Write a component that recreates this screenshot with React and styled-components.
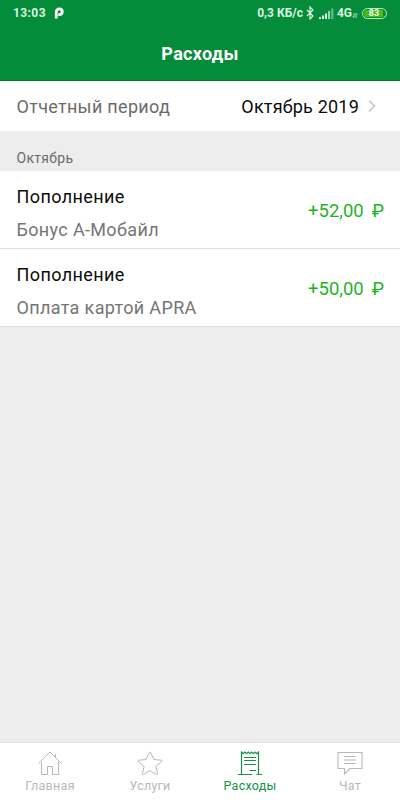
import React from 'react';
import styled, { createGlobalStyle } from 'styled-components';

const GlobalStyle = createGlobalStyle`
  body {
    margin: 0;
    background: #ededed;
  }
`;

const Screen = styled.div`
  display: flex;
  flex-direction: column;
  width: 100%;
  height: 100vh;
  overflow: hidden;
  background: #ededed;
  font-family: Roboto, 'Liberation Sans', sans-serif;
  white-space: nowrap;
`;

const Header = styled.header`
  flex: none;
  height: 81px;
  box-sizing: border-box;
  border-bottom: 1px solid #047a32;
  background: #048c3a;
  color: #fff;
`;

const StatusBar = styled.div`
  display: flex;
  align-items: center;
  justify-content: space-between;
  height: 26px;
  padding: 0 13px;
  color: #d9f5e2;
  font-size: 12px;
  font-weight: 700;
`;

const StatusGroup = styled.div`
  display: flex;
  align-items: center;

  svg {
    display: block;
    flex: none;
  }
`;

const Clock = styled.span`
  margin-right: 8px;
  letter-spacing: 0.4px;
`;

const Speed = styled.span`
  margin-right: 3px;
`;

const Signal = styled.span`
  margin: 0 3px 0 5px;
`;

const Battery = styled.span`
  display: flex;
  box-sizing: border-box;
  width: 25px;
  height: 11px;
  margin-left: 4px;
  padding: 1px;
  border: 1px solid #c3ecc0;
  border-radius: 6px;
`;

const BatteryLevel = styled.span`
  display: flex;
  align-items: center;
  justify-content: center;
  width: 18px;
  padding-left: 1px;
  border-radius: 4px 1px 1px 4px;
  background: #4cbb17;
  color: #f0ffe8;
  font-size: 9px;
  line-height: 7px;
`;

const Title = styled.h1`
  margin: 0;
  font-size: 18px;
  font-weight: 700;
  line-height: 55px;
  letter-spacing: 0.3px;
  text-align: center;
`;

const PeriodRow = styled.div`
  display: flex;
  flex: none;
  align-items: center;
  box-sizing: border-box;
  height: 50px;
  padding: 0 24px 0 16.500px;
  background: #fff;
  font-size: 18px;
`;

const PeriodLabel = styled.span`
  flex: 1;
  padding-top: 1px;
  color: #6b6b6b;
  letter-spacing: 0.3px;
`;

const PeriodValue = styled.span`
  margin-right: 9px;
  padding-top: 1px;
  color: #0c0c0c;
  letter-spacing: 0.2px;
`;

const SectionTitle = styled.div`
  flex: none;
  box-sizing: border-box;
  height: 40px;
  padding: 17px 16.500px 0;
  color: #6b6b6b;
  font-size: 14px;
  line-height: 21px;
  letter-spacing: 0.3px;
`;

const Operation = styled.div`
  display: flex;
  flex: none;
  align-items: center;
  justify-content: space-between;
  box-sizing: border-box;
  height: 78px;
  padding: 0 16px 0 16.500px;
  border-bottom: 1px solid #dedede;
  background: #fff;
  font-size: 18px;
`;

const OperationInfo = styled.div`
  display: flex;
  flex-direction: column;
  padding-top: 7px;
`;

const OperationName = styled.span`
  color: #0c0c0c;
  line-height: 33px;
  letter-spacing: 0.4px;
`;

const OperationNote = styled.span`
  color: #757575;
  line-height: 33px;
  letter-spacing: 0.35px;
`;

const Amount = styled.span`
  padding-top: 2px;
  color: #1fb41f;
  font-size: 18.500px;
`;

const Currency = styled.span`
  margin-left: 8px;
`;

const TabBar = styled.nav`
  display: flex;
  flex: none;
  box-sizing: border-box;
  height: 58px;
  margin-top: auto;
  border-top: 1px solid #e0e0e0;
  background: #fff;
`;

const Tab = styled.div`
  display: flex;
  flex: 1;
  flex-direction: column;
  align-items: center;
  padding-top: 8px;
  color: ${({ $active }) => ($active ? '#15914a' : '#b9b9b9')};
  font-size: 12.500px;
  line-height: 14px;

  svg {
    display: block;
    margin-bottom: 3px;
  }
`;

const TabLabel = styled.span`
  letter-spacing: ${({ $spacing }) => $spacing}px;
`;

const ParkingIcon = () => (
  <svg width="10" height="12" viewBox="0 0 9 11" fill="none" stroke="#fff" strokeWidth="2.600">
    <path d="M2 10.500V4.600C2 2.800 3 1.700 4.700 1.700S7.500 2.800 7.500 4.400 6.400 7 4.900 7H3.800" />
  </svg>
);

const BluetoothIcon = () => (
  <svg width="8" height="14" viewBox="0 0 8 14" fill="none" stroke="#d9f5e2" strokeWidth="1.200">
    <path d="M1 4l6 6-3 3V1l3 3-6 6" />
  </svg>
);

const SignalIcon = () => (
  <svg width="15" height="11" viewBox="0 0 15 11" fill="#d9f5e2">
    <path d="M0 9h2v2H0zM3 7.500h2V11H3zM6 5.500h2V11H6z" />
    <path d="M9 3h2v8H9z" opacity="0.7" />
    <path d="M12 0.500h2.500V11h-2.500z" opacity="0.4" />
  </svg>
);

const DataArrowsIcon = () => (
  <svg width="6" height="12" viewBox="0 0 6 12" stroke="#a9dfbb" strokeWidth="1" fill="none">
    <path d="M2 6v4.500L0.500 9.500M4 11V6.500L5.500 7.500" />
  </svg>
);

const ChevronIcon = () => (
  <svg width="8" height="12" viewBox="0 0 8 12" fill="none" stroke="#c6c6ca" strokeWidth="1.600">
    <path d="M1 0.700L6.500 6 1 11.300" />
  </svg>
);

const HomeIcon = () => (
  <svg width="24" height="25" viewBox="0 0 24 25" fill="none" stroke="currentColor">
    <path d="M0.500 12.500L12 1 23.500 12.500M17.500 3v3M3.500 11v12.500h6V15.500h5v8h6V11" />
  </svg>
);

const StarIcon = () => (
  <svg width="26" height="25" viewBox="0 0 26 25" fill="none" stroke="currentColor" strokeLinejoin="round">
    <path d="M12.300 1.400q.7-1.100 1.400 0l3.100 7.100 7.600.7q1.200.3.400 1.200l-6 5.100 1.800 7.300q.1 1.200-1 .7L13 19.600 6.400 23.500q-1.100.5-1-.7L7.200 15.500l-6-5.100q-.8-.9.400-1.200L9.200 8.500z" />
  </svg>
);

const ReceiptIcon = () => (
  <svg width="24" height="25" viewBox="0 0 24 25" fill="none" stroke="currentColor" strokeWidth="1.200">
    <path d="M3.500 23.500V1l1.700 1.600L6.900 1l1.700 1.600L10.300 1 12 2.600 13.700 1l1.700 1.600L17.100 1l1.700 1.600L20.500 1v22.500" />
    <path d="M0 23.500h14M18.500 23.500H24M11.500 19.500H18" />
    <path d="M6 6.500h12M6 9.500h12M6 13.500h12" />
  </svg>
);

const ChatIcon = () => (
  <svg width="26" height="25" viewBox="0 0 26 25" fill="none" stroke="currentColor" strokeWidth="1.100">
    <path d="M1 1.500h24v16H13L7.500 23v-5.500H1z" />
    <path d="M7 5.500h12M7 9h12M7 12.500h12" />
  </svg>
);

const operations = [
  { id: 1, name: 'Пополнение', note: 'Бонус А-Мобайл', amount: '+52,00' },
  { id: 2, name: 'Пополнение', note: 'Оплата картой APRA', amount: '+50,00' },
];

const tabs = [
  { label: 'Главная', Icon: HomeIcon, spacing: 0.3 },
  { label: 'Услуги', Icon: StarIcon, spacing: 0.2 },
  { label: 'Расходы', Icon: ReceiptIcon, spacing: 0.25, active: true },
  { label: 'Чат', Icon: ChatIcon, spacing: 0.2 },
];

const App = () => (
  <>
    <GlobalStyle />
    <Screen>
      <Header>
        <StatusBar>
          <StatusGroup>
            <Clock>13:03</Clock>
            <ParkingIcon />
          </StatusGroup>
          <StatusGroup>
            <Speed>0,3 КБ/с</Speed>
            <BluetoothIcon />
            <Signal>
              <SignalIcon />
            </Signal>
            <span>4G</span>
            <DataArrowsIcon />
            <Battery>
              <BatteryLevel>83</BatteryLevel>
            </Battery>
          </StatusGroup>
        </StatusBar>
        <Title>Расходы</Title>
      </Header>
      <PeriodRow>
        <PeriodLabel>Отчетный период</PeriodLabel>
        <PeriodValue>Октябрь 2019</PeriodValue>
        <ChevronIcon />
      </PeriodRow>
      <SectionTitle>Октябрь</SectionTitle>
      {operations.map(({ id, name, note, amount }) => (
        <Operation key={id}>
          <OperationInfo>
            <OperationName>{name}</OperationName>
            <OperationNote>{note}</OperationNote>
          </OperationInfo>
          <Amount>
            {amount}
            <Currency>₽</Currency>
          </Amount>
        </Operation>
      ))}
      <TabBar>
        {tabs.map(({ label, Icon, spacing, active }) => (
          <Tab key={label} $active={active}>
            <Icon />
            <TabLabel $spacing={spacing}>{label}</TabLabel>
          </Tab>
        ))}
      </TabBar>
    </Screen>
  </>
);

export default App;
